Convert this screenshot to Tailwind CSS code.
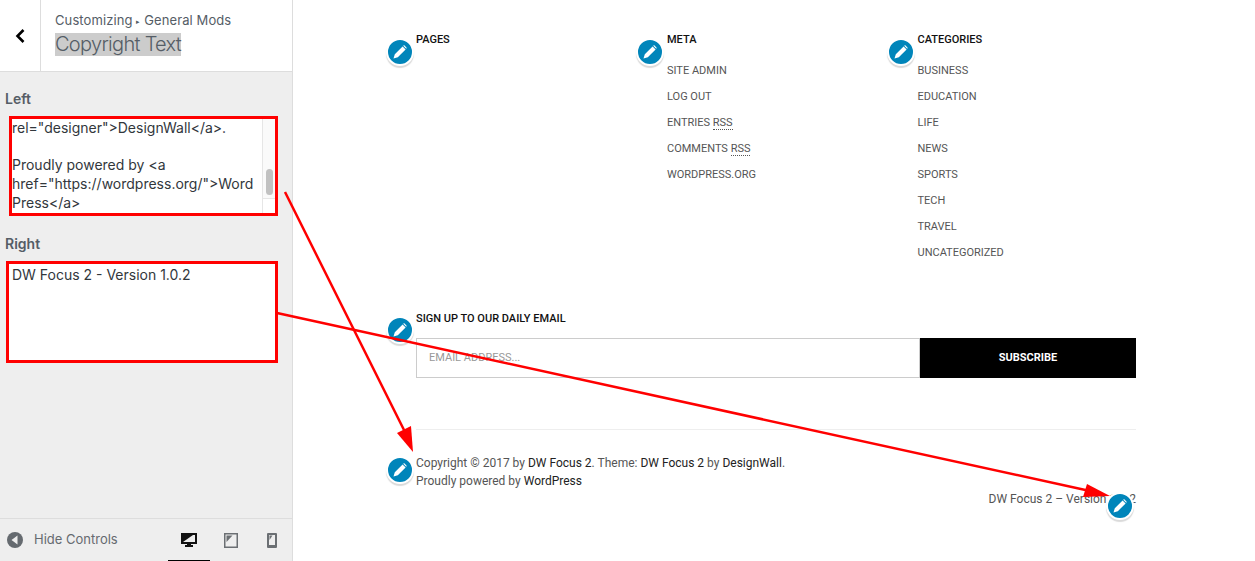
<!DOCTYPE html>
<html lang="en">
<head>
    <meta charset="UTF-8">
    <meta content="width=device-width, initial-scale=1.0" name="viewport">
    <title>Copyright Text</title>
    <script src="https://cdn.jsdelivr.net/npm/@tailwindcss/browser@4"></script>
</head>
<body class="bg-white overflow-hidden">
    <div class="relative flex w-[1255px] h-[561px] overflow-hidden">
        <!-- customizer sidebar -->
        <aside class="w-[293px] h-full shrink-0 flex flex-col bg-[#eeeeee] border-r border-[#dddddd] font-['Inter','Liberation_Sans',sans-serif]">
            <div class="h-[72px] shrink-0 flex bg-white border-b border-[#dddddd]">
                <div class="w-[41px] shrink-0 flex items-center justify-center border-r border-[#dddddd]">
                    <svg width="12" height="16" viewBox="0 0 12 16"><path d="M9.5 2 L3.5 8 L9.5 14" fill="none" stroke="#000" stroke-width="2.6"/></svg>
                </div>
                <div class="pl-[14px] pt-[12px]">
                    <div class="text-[13px] leading-[16px] text-[#555d66] whitespace-nowrap tracking-[0.1px]">Customizing <span class="text-[7px] align-[1px]">▸</span> General Mods</div>
                    <div class="mt-[3px] text-[20px] leading-[23px] font-light text-[#555d66] bg-[#cccccc] w-fit tracking-[-0.7px]">Copyright Text</div>
                </div>
            </div>
            <div class="flex-1 pl-[5px] pr-[14px]">
                <div class="mt-[18px] text-[14px] leading-[18px] font-semibold text-[#555d66]">Left</div>
                <div class="relative mt-[8px] h-[100px] ml-[4px] border-[3px] border-[#ff0000] bg-white overflow-hidden text-[14px] leading-[18.7px] text-[#32373c] pl-[0px]">
                    <div class="pt-[0px] pl-[0px] w-[246px] break-all whitespace-pre-line">rel="designer"&gt;DesignWall&lt;/a&gt;.

                        Proudly powered by &lt;a
                        href="https://wordpress.org/"&gt;Word
                        Press&lt;/a&gt;</div>
                    <div class="absolute right-0 top-0 bottom-0 w-[13px] bg-[#fafafa] border-l border-[#e6e6e6]">
                        <div class="absolute left-[3px] top-[50px] w-[7px] h-[26px] rounded-full bg-[#c1c1c1]"></div>
                        <div class="absolute bottom-0 left-0 right-0 h-[15px] bg-white border-t border-[#e6e6e6]"></div>
                    </div>
                </div>
                <div class="mt-[19px] text-[14px] leading-[18px] font-semibold text-[#555d66]">Right</div>
                <div class="mt-[8px] ml-[1px] h-[102px] border-[3px] border-[#ff0000] bg-white pl-[3px] pt-[2px] text-[14px] leading-[18.7px] text-[#32373c]">DW Focus 2 - Version 1.0.2</div>
            </div>
            <div class="h-[43px] shrink-0 flex items-center border-t border-[#dddddd] pl-[7px]">
                <svg width="16" height="16" viewBox="0 0 16 16"><circle cx="8" cy="8" r="8" fill="#656a6f"/><path d="M10.5 3.5 V12.5 L4.5 8 Z" fill="#eeeeee"/></svg>
                <span class="ml-[11px] text-[13px] text-[#656a70] w-[134px]">Hide Controls</span>
                <div class="flex items-end h-full">
                    <div class="w-[42px] h-full flex items-center justify-center border-b border-black">
                        <svg width="16" height="16" viewBox="0 0 16 16"><path fill-rule="evenodd" d="M0 1h16v11H10v1h2v2H4v-2h2v-1H0z M2 3v7h12V3z" fill="#111"/><path d="M2 3h10L2 10z" fill="#111"/></svg>
                    </div>
                    <div class="w-[41px] h-full flex items-center justify-center">
                        <svg width="14" height="15" viewBox="0 0 14 15"><path fill-rule="evenodd" d="M0 0h14v15H0z M1.5 1.5v12h11v-12z" fill="#6b6f73"/><path d="M2.5 2.5h6L2.5 9z" fill="#6b6f73"/></svg>
                    </div>
                    <div class="w-[41px] h-full flex items-center justify-center">
                        <svg width="10" height="15" viewBox="0 0 10 15"><path fill-rule="evenodd" d="M0 1a1 1 0 0 1 1-1h8a1 1 0 0 1 1 1v13a1 1 0 0 1-1 1H1a1 1 0 0 1-1-1z M2 2v10h6V2z" fill="#6b6f73"/><path d="M2.5 2.5h3L2.5 7z" fill="#6b6f73"/></svg>
                    </div>
                </div>
            </div>
        </aside>

        <!-- site preview -->
        <main class="flex-1 pl-[123px] pt-[33px] font-['Roboto','Liberation_Sans',sans-serif]">
            <div class="w-[720px]">
                <div class="grid grid-cols-[251px_250.5px_1fr] h-[258px]">
                    <section>
                        <h3 class="text-[11px] leading-[14px] font-medium text-[#111111]">PAGES</h3>
                    </section>
                    <section>
                        <h3 class="text-[11px] leading-[14px] font-medium text-[#111111]">META</h3>
                        <ul class="mt-[11px] text-[11px] leading-[26px] text-[#555555]">
                            <li>SITE ADMIN</li>
                            <li>LOG OUT</li>
                            <li>ENTRIES <span class="border-b border-dotted border-[#555555]">RSS</span></li>
                            <li>COMMENTS <span class="border-b border-dotted border-[#555555]">RSS</span></li>
                            <li>WORDPRESS.ORG</li>
                        </ul>
                    </section>
                    <section>
                        <h3 class="text-[11px] leading-[14px] font-medium text-[#111111]">CATEGORIES</h3>
                        <ul class="mt-[11px] text-[11px] leading-[26px] text-[#555555]">
                            <li>BUSINESS</li>
                            <li>EDUCATION</li>
                            <li>LIFE</li>
                            <li>NEWS</li>
                            <li>SPORTS</li>
                            <li>TECH</li>
                            <li>TRAVEL</li>
                            <li>UNCATEGORIZED</li>
                        </ul>
                    </section>
                </div>
                <h3 class="mt-[21px] text-[11px] leading-[14px] font-medium text-[#111111]">SIGN UP TO OUR DAILY EMAIL</h3>
                <div class="mt-[12px] flex h-[40px]">
                    <div class="w-[504px] border border-[#cccccc] flex items-center pl-[12px] text-[11px] text-[#999999]">EMAIL ADDRESS...</div>
                    <div class="flex-1 bg-black flex items-center justify-center text-[11px] font-bold text-white">SUBSCRIBE</div>
                </div>
                <div class="mt-[51px] border-t border-[#eeeeee] pt-[24px] text-[12px] leading-[18px] text-[#555555]">
                    <p>Copyright © 2017 by <span class="text-[#222222]">DW Focus 2</span>. Theme: <span class="text-[#222222]">DW Focus 2</span> by <span class="text-[#222222]">DesignWall</span>.</p>
                    <p>Proudly powered by <span class="text-[#222222]">WordPress</span></p>
                    <p class="text-right">DW Focus 2 – Version 1.0.2</p>
                </div>
            </div>
        </main>

        <!-- edit shortcuts -->
        <span class="absolute left-[386px] top-[38px] w-[28px] h-[28px] rounded-full bg-[#0085ba] border-2 border-white shadow-[0_2px_1px_rgba(0,0,0,0.15)] flex items-center justify-center"><svg width="14" height="14" viewBox="0 0 14 14"><path d="M0.5 13.5 L1.8 9.2 L9.6 1.4 L12.6 4.4 L4.8 12.2 Z M10.4 0.6 Q11 0 11.6 0.6 L13.4 2.4 Q14 3 13.4 3.6 L13.2 3.8 L10.2 0.8 Z" fill="#fff"/></svg></span>
        <span class="absolute left-[636px] top-[38px] w-[28px] h-[28px] rounded-full bg-[#0085ba] border-2 border-white shadow-[0_2px_1px_rgba(0,0,0,0.15)] flex items-center justify-center"><svg width="14" height="14" viewBox="0 0 14 14"><path d="M0.5 13.5 L1.8 9.2 L9.6 1.4 L12.6 4.4 L4.8 12.2 Z M10.4 0.6 Q11 0 11.6 0.6 L13.4 2.4 Q14 3 13.4 3.6 L13.2 3.8 L10.2 0.8 Z" fill="#fff"/></svg></span>
        <span class="absolute left-[887px] top-[38px] w-[28px] h-[28px] rounded-full bg-[#0085ba] border-2 border-white shadow-[0_2px_1px_rgba(0,0,0,0.15)] flex items-center justify-center"><svg width="14" height="14" viewBox="0 0 14 14"><path d="M0.5 13.5 L1.8 9.2 L9.6 1.4 L12.6 4.4 L4.8 12.2 Z M10.4 0.6 Q11 0 11.6 0.6 L13.4 2.4 Q14 3 13.4 3.6 L13.2 3.8 L10.2 0.8 Z" fill="#fff"/></svg></span>
        <span class="absolute left-[386px] top-[316px] w-[28px] h-[28px] rounded-full bg-[#0085ba] border-2 border-white shadow-[0_2px_1px_rgba(0,0,0,0.15)] flex items-center justify-center"><svg width="14" height="14" viewBox="0 0 14 14"><path d="M0.5 13.5 L1.8 9.2 L9.6 1.4 L12.6 4.4 L4.8 12.2 Z M10.4 0.6 Q11 0 11.6 0.6 L13.4 2.4 Q14 3 13.4 3.6 L13.2 3.8 L10.2 0.8 Z" fill="#fff"/></svg></span>
        <span class="absolute left-[386px] top-[456px] w-[28px] h-[28px] rounded-full bg-[#0085ba] border-2 border-white shadow-[0_2px_1px_rgba(0,0,0,0.15)] flex items-center justify-center"><svg width="14" height="14" viewBox="0 0 14 14"><path d="M0.5 13.5 L1.8 9.2 L9.6 1.4 L12.6 4.4 L4.8 12.2 Z M10.4 0.6 Q11 0 11.6 0.6 L13.4 2.4 Q14 3 13.4 3.6 L13.2 3.8 L10.2 0.8 Z" fill="#fff"/></svg></span>
        <span class="absolute left-[1106px] top-[492px] w-[28px] h-[28px] rounded-full bg-[#0085ba] border-2 border-white shadow-[0_2px_1px_rgba(0,0,0,0.15)] flex items-center justify-center"><svg width="14" height="14" viewBox="0 0 14 14"><path d="M0.5 13.5 L1.8 9.2 L9.6 1.4 L12.6 4.4 L4.8 12.2 Z M10.4 0.6 Q11 0 11.6 0.6 L13.4 2.4 Q14 3 13.4 3.6 L13.2 3.8 L10.2 0.8 Z" fill="#fff"/></svg></span>

        <!-- red annotation arrows -->
        <svg class="absolute left-0 top-0 pointer-events-none" width="1255" height="561" viewBox="0 0 1255 561">
            <line x1="285" y1="192" x2="405" y2="432" stroke="#ff0000" stroke-width="2.5"/>
            <polygon points="413,452 397,433 411,426" fill="#ff0000"/>
            <line x1="277" y1="313" x2="1090" y2="491" stroke="#ff0000" stroke-width="2.5"/>
            <polygon points="1110,496 1083,497 1087,484" fill="#ff0000"/>
        </svg>
    </div>
</body>
</html>
